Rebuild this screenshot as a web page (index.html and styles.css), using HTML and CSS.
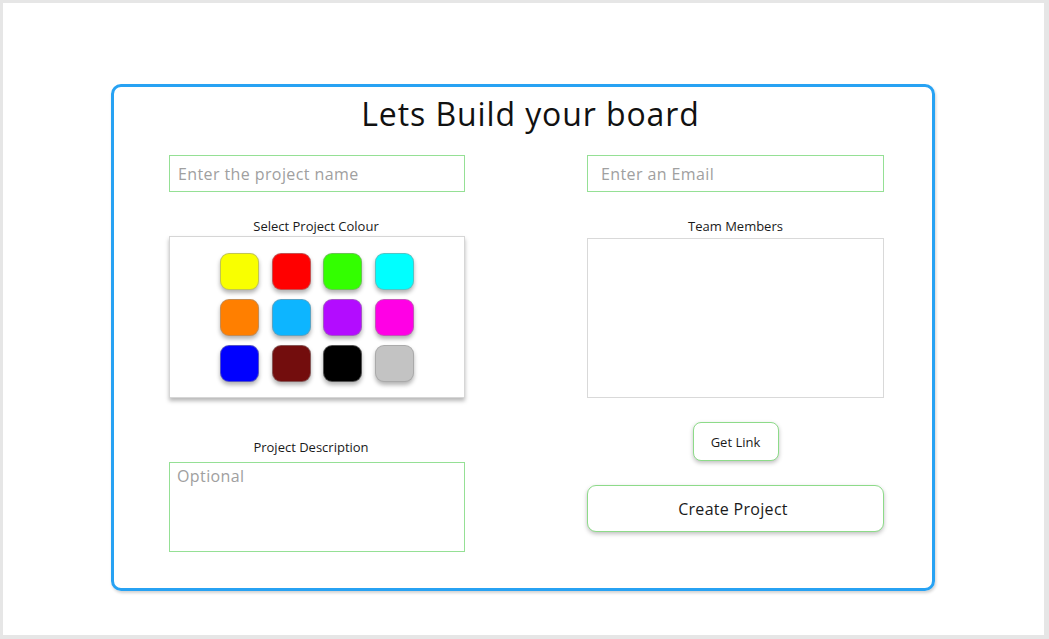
FILE: index.html
```html
<!DOCTYPE html>
<html lang="en">
<head>
<meta charset="utf-8">
<title>Lets Build your board</title>
<link rel="stylesheet" href="styles.css">
</head>
<body>
<div class="page">
  <div class="card">
    <h1 class="title">Lets Build your board</h1>
    <div class="columns">
      <div class="col">
        <input class="field" type="text" placeholder="Enter the project name">
        <div class="label label-colour">Select Project Colour</div>
        <div class="colour-box">
          <div class="swatches">
            <span class="swatch sw-yellow"></span>
            <span class="swatch sw-red"></span>
            <span class="swatch sw-green"></span>
            <span class="swatch sw-cyan"></span>
            <span class="swatch sw-orange"></span>
            <span class="swatch sw-sky"></span>
            <span class="swatch sw-purple"></span>
            <span class="swatch sw-magenta"></span>
            <span class="swatch sw-blue"></span>
            <span class="swatch sw-maroon"></span>
            <span class="swatch sw-black"></span>
            <span class="swatch sw-grey"></span>
          </div>
        </div>
        <div class="label label-desc">Project Description</div>
        <textarea class="desc" placeholder="Optional"></textarea>
      </div>
      <div class="col col-right">
        <input class="field field-email" type="text" placeholder="Enter an Email">
        <div class="label label-team">Team Members</div>
        <div class="team-box"></div>
        <button class="btn btn-link" type="button">Get Link</button>
        <button class="btn btn-create" type="button">Create Project</button>
      </div>
    </div>
  </div>
</div>
</body>
</html>
```
FILE: styles.css
```css
* { box-sizing: border-box; }

html, body {
  margin: 0;
  padding: 0;
}

body {
  background: #e6e6e6;
  font-family: "Open Sans", "DejaVu Sans", sans-serif;
  color: #1a1a1a;
}

.page {
  margin: 3px 5px 4px 3px;
  height: 632px;
  background: #ffffff;
  padding: 81px 0 0 108px;
}

.card {
  width: 824px;
  height: 507px;
  border: 3px solid #27a2f3;
  border-radius: 10px;
  box-shadow: 1px 2px 3px rgba(0, 0, 0, 0.18);
  padding-top: 8px;
}

.title {
  margin: 0 0 0 15px;
  text-align: center;
  font-size: 32px;
  line-height: 38px;
  font-weight: 400;
  letter-spacing: 0.9px;
  color: #111;
}

.columns {
  display: grid;
  grid-template-columns: 296px 297px;
  column-gap: 122px;
  padding-left: 55px;
  margin-top: 22px;
}

.col {
  display: flex;
  flex-direction: column;
}

.col-right {
  align-items: center;
}

.field {
  width: 296px;
  height: 37px;
  border: 1px solid #95e095;
  border-radius: 0;
  padding: 0 8px;
  font-family: "Open Sans", "DejaVu Sans", sans-serif;
  font-size: 16px;
  letter-spacing: 0.4px;
  color: #333;
  background: #fff;
  outline: none;
}

.field-email {
  width: 297px;
  padding-left: 13px;
}

.field::placeholder,
.desc::placeholder {
  color: #a0a0a0;
}

.label {
  font-size: 13px;
  line-height: 16px;
  text-align: center;
  color: #1a1a1a;
}

.label-colour {
  margin-top: 26px;
  margin-bottom: 2px;
  padding-right: 2px;
}

.label-team {
  margin-top: 26px;
  margin-bottom: 4px;
}

.label-desc {
  margin-top: 41px;
  margin-bottom: 7px;
  padding-right: 12px;
}

.colour-box {
  height: 162px;
  border: 1px solid #d6d6d6;
  box-shadow: 0 3px 4px rgba(0, 0, 0, 0.28);
  padding-top: 16px;
  display: flex;
  justify-content: center;
}

.swatches {
  display: grid;
  grid-template-columns: repeat(4, 39px);
  grid-auto-rows: 37px;
  column-gap: 12.5px;
  row-gap: 9px;
}

.swatch {
  display: block;
  border-radius: 9px;
  border: 1px solid rgba(150, 150, 150, 0.55);
  box-shadow: 0 3px 4px rgba(0, 0, 0, 0.3);
}

.sw-yellow  { background: #f9ff00; }
.sw-red     { background: #ff0000; }
.sw-green   { background: #33ff00; }
.sw-cyan    { background: #00ffff; }
.sw-orange  { background: #ff7f00; }
.sw-sky     { background: #0db5ff; }
.sw-purple  { background: #b30cff; }
.sw-magenta { background: #ff00e5; }
.sw-blue    { background: #0000ff; }
.sw-maroon  { background: #730d0d; }
.sw-black   { background: #000000; }
.sw-grey    { background: #c3c3c3; }

.desc {
  width: 296px;
  height: 90px;
  border: 1px solid #95e095;
  border-radius: 0;
  padding: 3px 7px;
  font-family: "Open Sans", "DejaVu Sans", sans-serif;
  font-size: 16px;
  line-height: 20px;
  letter-spacing: 0.4px;
  resize: none;
  outline: none;
  display: block;
}

.team-box {
  width: 297px;
  height: 160px;
  border: 1px solid #d9d9d9;
}

.btn {
  background: #fff;
  border: 1px solid #8ddb89;
  box-shadow: 0 2px 4px rgba(0, 0, 0, 0.25);
  font-family: "Open Sans", "DejaVu Sans", sans-serif;
  color: #1a1a1a;
  padding: 0;
  cursor: pointer;
}

.btn-link {
  margin-top: 24px;
  width: 86px;
  height: 39px;
  border-radius: 8px;
  font-size: 13px;
}

.btn-create {
  margin-top: 24px;
  width: 297px;
  height: 47px;
  border-radius: 9px;
  font-size: 16px;
  letter-spacing: 0.3px;
  padding-right: 5px;
}
```
